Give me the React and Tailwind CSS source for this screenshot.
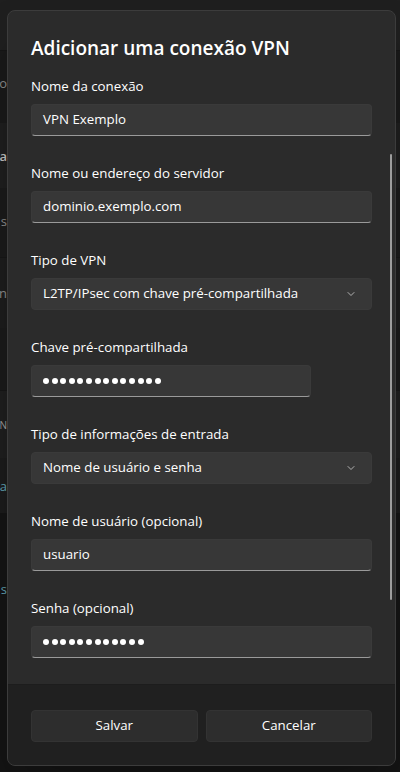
import { ChevronDown } from "lucide-react";

const font = { fontFamily: '"Open Sans", "Noto Sans", sans-serif' };

function Peek({ text, className }) {
  return (
    <div className="w-[7px] flex justify-end whitespace-nowrap leading-[16px]">
      <span className={className}>{text}</span>
    </div>
  );
}

function Backdrop() {
  return (
    <div className="flex flex-col text-[13px] text-[#8a8a8a]">
      <div className="h-[51px] bg-[#1f1f1f] border-b border-[#151515]" />
      <div className="h-[72px] bg-[#191919] flex items-center pb-[8px]">
        <Peek text="o" />
      </div>
      <div className="h-[65px] bg-[#1e1e1e] flex items-center">
        <Peek text="a" className="text-[#bdbdbd] font-semibold" />
      </div>
      <div className="h-[69px] bg-[#1a1a1a] flex items-center pb-[4px]">
        <Peek text="s" />
      </div>
      <div className="h-[71px] bg-[#1c1c1c] border-t border-[#161616] flex items-center">
        <Peek text="n" />
      </div>
      <div className="h-[62px] bg-[#1a1a1a]" />
      <div className="h-[68px] bg-[#1e1e1e] border-t border-[#161616] flex items-center">
        <Peek text="N" className="text-[#9a9a9a] text-[10px]" />
      </div>
      <div className="h-[55px] bg-[#1b1b1b] flex items-center">
        <Peek text="a" className="text-[#5f9fb0]" />
      </div>
      <div className="h-[259px] bg-[#141414] flex flex-col pt-[68px]">
        <Peek text="s" className="text-[#5f9fb0]" />
      </div>
    </div>
  );
}

function TextInput({ value, width = "w-full" }) {
  return (
    <div className={`${width} h-[32px] bg-[#373737] rounded-[4px] border border-[#3a3a3a] border-b-[#9a9a9a] flex items-center px-[11px] text-[13.3px] text-white`}>
      {value}
    </div>
  );
}

function Dots({ count, width = "w-full" }) {
  return (
    <div className={`${width} h-[32px] bg-[#373737] rounded-[4px] border border-[#3a3a3a] border-b-[#9a9a9a] flex items-center px-[11px] gap-[2.6px]`}>
      {Array.from({ length: count }).map((_, i) => (
        <span key={i} className="w-[6px] h-[6px] rounded-full bg-white" />
      ))}
    </div>
  );
}

function Select({ value }) {
  return (
    <div className="w-full h-[32px] bg-[#373737] rounded-[4px] border border-[#3a3a3a] flex items-center pl-[11px] pr-[14px] text-[13.3px] text-white">
      <span className="flex-1">{value}</span>
      <ChevronDown size={12} strokeWidth={1.6} className="text-[#cfcfcf]" />
    </div>
  );
}

function Field({ label, children }) {
  return (
    <div className="flex flex-col">
      <label className="text-[13.3px] leading-[20px] text-white mb-[8px]">{label}</label>
      {children}
    </div>
  );
}

export default function App() {
  return (
    <div className="relative w-[400px] h-[772px] overflow-hidden bg-[#1a1a1a]" style={font}>
      <Backdrop />
      <div className="absolute left-[7px] top-[10px] w-[389px] h-[756px] rounded-[8px] border border-[#3c3c3c] bg-[#2b2b2b] flex flex-col overflow-hidden shadow-2xl">
        <div className="relative flex-1 overflow-hidden px-[23px] pt-[23px]">
          <h1 className="text-[19px] leading-[28px] font-semibold text-white">Adicionar uma conexão VPN</h1>
          <div className="flex flex-col gap-[27px] mt-[14px]">
            <Field label="Nome da conexão">
              <TextInput value="VPN Exemplo" />
            </Field>
            <Field label="Nome ou endereço do servidor">
              <TextInput value="dominio.exemplo.com" />
            </Field>
            <Field label="Tipo de VPN">
              <Select value="L2TP/IPsec com chave pré-compartilhada" />
            </Field>
            <Field label="Chave pré-compartilhada">
              <Dots count={14} width="w-[280px]" />
            </Field>
            <Field label="Tipo de informações de entrada">
              <Select value="Nome de usuário e senha" />
            </Field>
            <Field label="Nome de usuário (opcional)">
              <TextInput value="usuario" />
            </Field>
            <Field label="Senha (opcional)">
              <Dots count={12} />
            </Field>
          </div>
          <div className="absolute right-[3px] top-[143px] w-[2px] h-[446px] rounded-full bg-[#9d9d9d]" />
        </div>
        <div className="h-[81px] bg-[#202020] border-t border-[#1d1d1d] px-[23px] pt-[25px] flex gap-[8px]">
          <button className="flex-1 h-[32px] rounded-[4px] bg-[#2d2d2d] border border-[#333333] text-[13.3px] text-white">Salvar</button>
          <button className="flex-1 h-[32px] rounded-[4px] bg-[#2d2d2d] border border-[#333333] text-[13.3px] text-white">Cancelar</button>
        </div>
      </div>
    </div>
  );
}
